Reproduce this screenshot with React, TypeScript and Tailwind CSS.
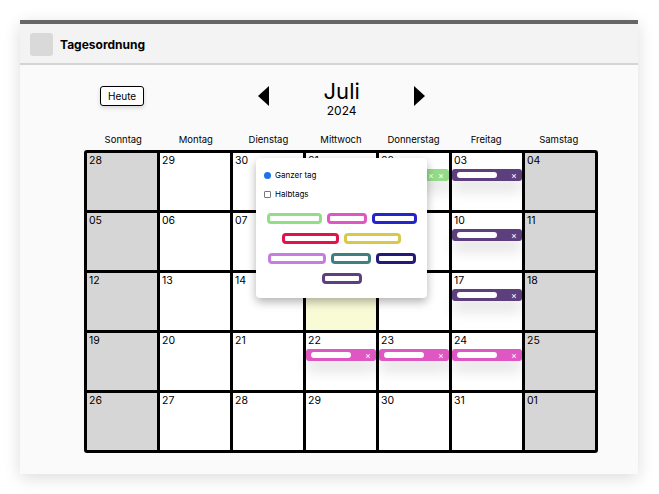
import React from "react";

type Ev = { color: string; double?: boolean };

const days = ["Sonntag", "Montag", "Dienstag", "Mittwoch", "Donnerstag", "Freitag", "Samstag"];

const cells: { n: string; ev?: Ev; today?: boolean }[] = [
  { n: "28" }, { n: "29" }, { n: "30" }, { n: "01" }, { n: "02", ev: { color: "bg-[#93dd88]", double: true } }, { n: "03", ev: { color: "bg-[#5e3f7e]" } }, { n: "04" },
  { n: "05" }, { n: "06" }, { n: "07" }, { n: "08" }, { n: "09" }, { n: "10", ev: { color: "bg-[#5e3f7e]" } }, { n: "11" },
  { n: "12" }, { n: "13" }, { n: "14" }, { n: "15", today: true }, { n: "16" }, { n: "17", ev: { color: "bg-[#5e3f7e]" } }, { n: "18" },
  { n: "19" }, { n: "20" }, { n: "21" }, { n: "22", ev: { color: "bg-[#df57c3]" } }, { n: "23", ev: { color: "bg-[#df57c3]" } }, { n: "24", ev: { color: "bg-[#df57c3]" } }, { n: "25" },
  { n: "26" }, { n: "27" }, { n: "28" }, { n: "29" }, { n: "30" }, { n: "31" }, { n: "01" },
];

function EventBar({ ev }: { ev: Ev }) {
  return (
    <div className={`mx-[-2px] mt-[2px] flex h-[12px] items-center rounded-[3px] px-[5px] shadow-[0_10px_14px_rgba(0,0,0,0.12)] ${ev.color}`}>
      <span className="h-[6px] w-[40px] rounded-full bg-white" />
      <span className="ml-auto flex gap-[4px] text-[9px] leading-none text-white">
        {ev.double && <span>×</span>}
        <span>×</span>
      </span>
    </div>
  );
}

function Pill({ c, w }: { c: string; w: string }) {
  return <span className={`h-[11px] rounded-[4px] border-[3px] bg-white ${c} ${w}`} />;
}

export default function App() {
  return (
    <div className="bg-white p-[20px] font-['Inter','Liberation_Sans',sans-serif] text-black">
      <div className="flex h-[454px] w-[618px] flex-col bg-[#fafafa] shadow-[0_4px_16px_rgba(0,0,0,0.14)]">
        <div className="h-[4px] bg-[#666666]" />
        <div className="flex h-[41px] items-center gap-[7px] border-b-2 border-[#d4d4d4] bg-[#f3f3f3] px-[10px] pt-[2px]">
          <div className="h-[23px] w-[23px] rounded-[3px] bg-[#d9d9d9]" />
          <span className="text-[12px] font-bold">Tagesordnung</span>
        </div>

        <div className="flex items-start pt-[15px]">
          <button className="ml-[80px] mt-[6px] h-[20px] rounded-[3px] border border-black bg-white px-[7px] text-[10px] shadow-[0_2px_4px_rgba(0,0,0,0.15)]">
            Heute
          </button>
          <svg className="ml-[114px] mt-[6px]" width="12" height="20" viewBox="0 0 12 20">
            <path d="M11 0 L0 10 L11 20 Z" fill="black" />
          </svg>
          <div className="-mt-[2px] flex w-[143px] flex-col items-center">
            <span className="text-[22px] leading-[26px]">Juli</span>
            <span className="text-[12px] leading-[13px]">2024</span>
          </div>
          <svg className="mt-[6px]" width="12" height="20" viewBox="0 0 12 20">
            <path d="M1 0 L12 10 L1 20 Z" fill="black" />
          </svg>
        </div>

        <div className="ml-[64px] mt-[17px] w-[514px]">
          <div className="grid grid-cols-7 px-[3px] pb-[4px]">
            {days.map((d) => (
              <span key={d} className="text-center text-[9.5px] leading-[12px]">{d}</span>
            ))}
          </div>
          <div className="relative">
            <div className="grid grid-cols-7 gap-[3px] rounded-[3px] border-[3px] border-black bg-black">
              {cells.map((c, i) => {
                const weekend = i % 7 === 0 || i % 7 === 6;
                const bg = c.today ? "bg-[#f9fad6]" : weekend ? "bg-[#d6d6d6]" : "bg-white";
                return (
                  <div key={i} className={`h-[57px] px-[2px] pt-[2px] ${bg}`}>
                    <div className="text-[10.5px] leading-[12px] text-black">{c.n}</div>
                    {c.ev && <EventBar ev={c.ev} />}
                  </div>
                );
              })}
            </div>

            <div className="absolute left-[172px] top-[8px] flex h-[140px] w-[171px] flex-col rounded-[4px] bg-white px-[8px] pt-[11px] shadow-[0_4px_10px_rgba(0,0,0,0.3)]">
              <label className="flex items-center gap-[4px] text-[8px]">
                <span className="h-[7px] w-[7px] rounded-full bg-[#1a73e8]" />
                Ganzer tag
              </label>
              <label className="mt-[7px] flex items-center gap-[4px] text-[8px]">
                <span className="h-[7px] w-[7px] rounded-[1px] border border-[#777] bg-white" />
                Halbtags
              </label>
              <div className="mt-[13px] flex flex-col items-center gap-[9px]">
                <div className="flex gap-[5px]">
                  <Pill c="border-[#93dd88]" w="w-[55px]" />
                  <Pill c="border-[#df57c3]" w="w-[40px]" />
                  <Pill c="border-[#2424c8]" w="w-[45px]" />
                </div>
                <div className="flex gap-[5px]">
                  <Pill c="border-[#e0144a]" w="w-[57px]" />
                  <Pill c="border-[#d8c94a]" w="w-[57px]" />
                </div>
                <div className="flex gap-[5px]">
                  <Pill c="border-[#c67ddf]" w="w-[58px]" />
                  <Pill c="border-[#3e7f80]" w="w-[40px]" />
                  <Pill c="border-[#231a78]" w="w-[40px]" />
                </div>
                <div className="flex">
                  <Pill c="border-[#5e3f7e]" w="w-[40px]" />
                </div>
              </div>
            </div>
          </div>
        </div>
      </div>
    </div>
  );
}
